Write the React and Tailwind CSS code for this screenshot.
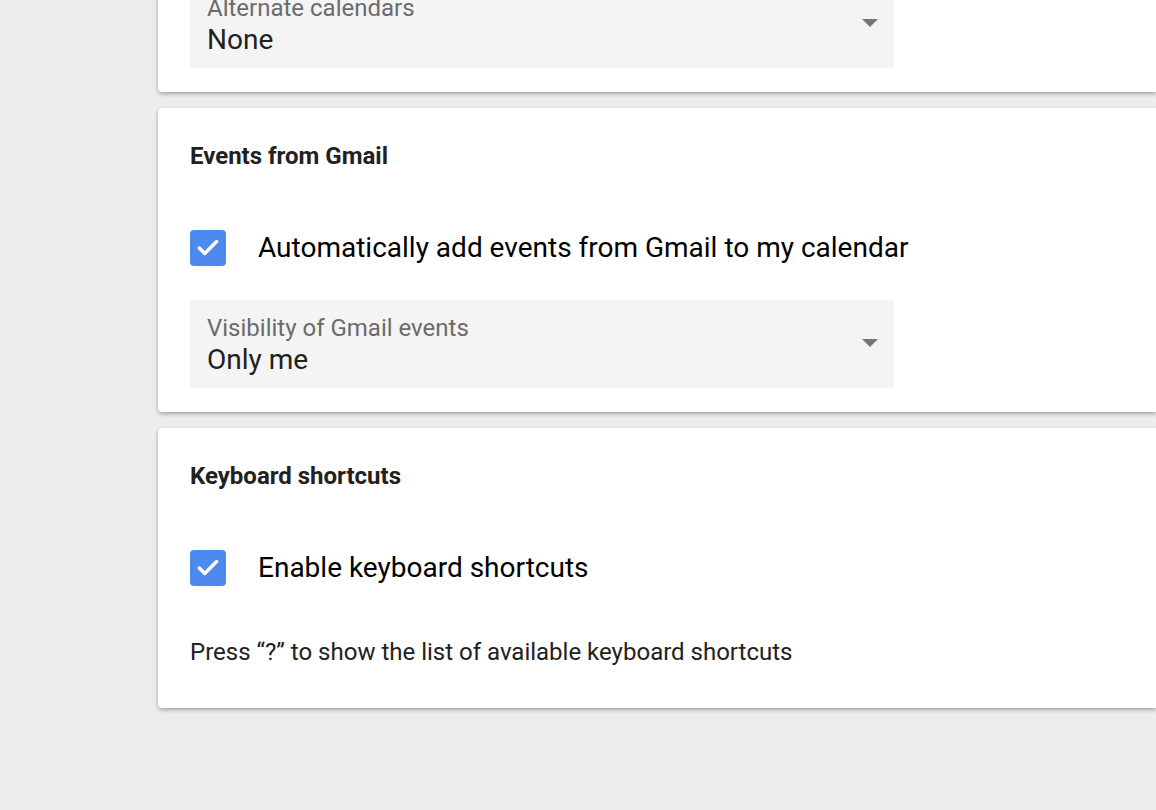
import { Check } from "lucide-react";

function Select({ label, value }) {
  return (
    <div className="w-[704px] h-[88px] rounded-[4px] bg-[#f4f4f4] pl-[17px] pr-[16px] pt-[14px] flex items-start justify-between">
      <div className="flex flex-col">
        <span className="text-[24px] leading-[28px] text-[#6b6b6b]">{label}</span>
        <span className="mt-[2px] text-[28px] leading-[32px] text-[#212121]">{value}</span>
      </div>
      <svg width="16" height="8" viewBox="0 0 16 8" className="mt-[25px]">
        <path d="M0 0 L16 0 L8 8 Z" fill="#757575" />
      </svg>
    </div>
  );
}

function CheckRow({ label }) {
  return (
    <div className="flex items-center gap-[32px] h-[36px]">
      <span className="w-[36px] h-[36px] rounded-[4px] bg-[#4d8af0] flex items-center justify-center">
        <Check size={26} strokeWidth={3.2} color="#fff" />
      </span>
      <span className="text-[28px] leading-[32px] text-black">{label}</span>
    </div>
  );
}

function Card({ className = "", children }) {
  return (
    <div className={"bg-white rounded-l-[4px] shadow-[0_2px_4px_rgba(0,0,0,0.3),0_0_2px_rgba(0,0,0,0.08)] px-[32px] " + className}>
      {children}
    </div>
  );
}

export default function App() {
  const font = { fontFamily: "Roboto, 'Liberation Sans', sans-serif" };
  return (
    <div className="w-[1156px] h-[810px] overflow-hidden bg-[#ededed] pl-[158px]" style={font}>
      <div className="flex flex-col gap-[16px]">
        <Card className="-mt-[20px] pb-[24px]">
          <Select label="Alternate calendars" value="None" />
        </Card>

        <Card className="pt-[32px] pb-[24px]">
          <h2 className="text-[24px] leading-[32px] font-bold text-[#212121]">Events from Gmail</h2>
          <div className="mt-[58px]">
            <CheckRow label="Automatically add events from Gmail to my calendar" />
          </div>
          <div className="mt-[34px]">
            <Select label="Visibility of Gmail events" value="Only me" />
          </div>
        </Card>

        <Card className="pt-[32px] pb-[40px]">
          <h2 className="text-[24px] leading-[32px] font-bold text-[#212121]">Keyboard shortcuts</h2>
          <div className="mt-[58px]">
            <CheckRow label="Enable keyboard shortcuts" />
          </div>
          <p className="mt-[50px] text-[24px] leading-[32px] text-[#212121]">
            Press “?” to show the list of available keyboard shortcuts
          </p>
        </Card>
      </div>
    </div>
  );
}
